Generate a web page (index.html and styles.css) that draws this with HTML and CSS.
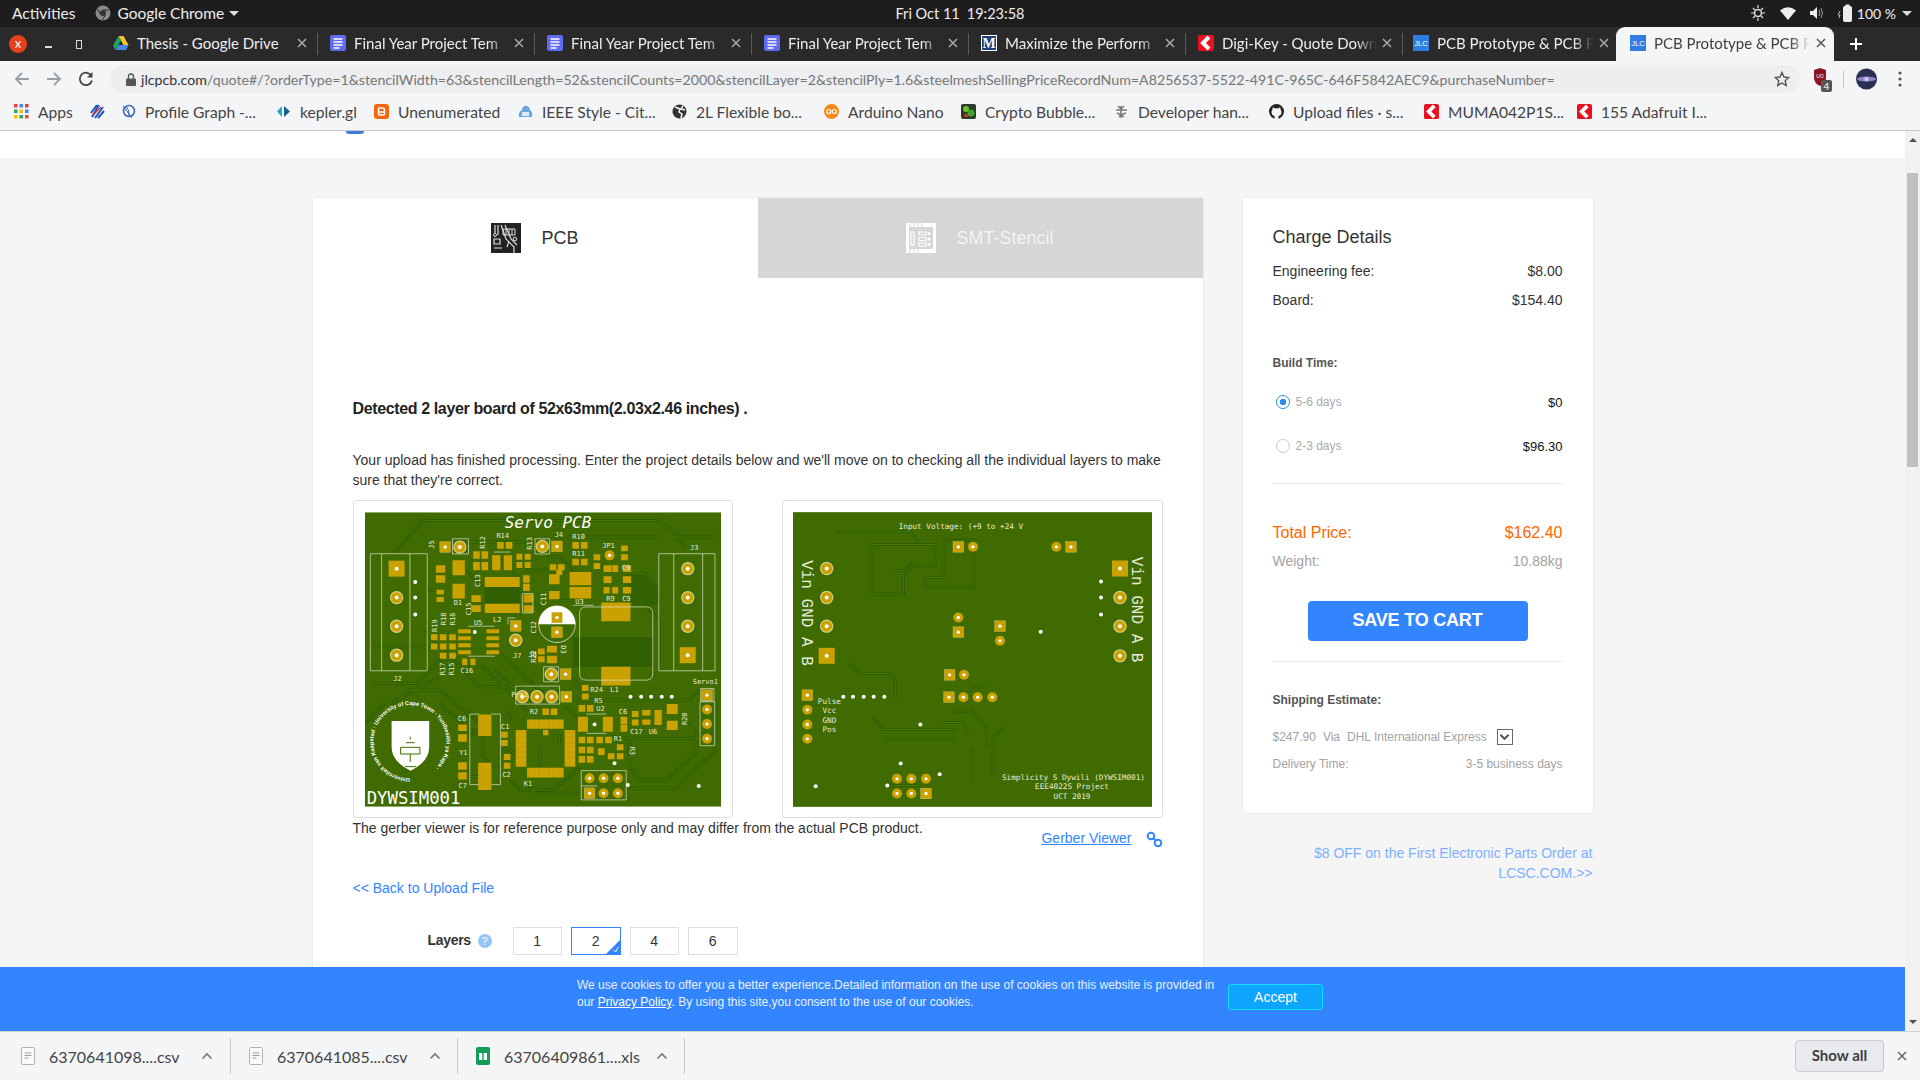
FILE: index.html

```html
<!DOCTYPE html>
<html lang="en">
<head>
	<meta charset="UTF-8">
	<title>PCB Prototype &amp; PCB Fabrication</title>
	<link rel="stylesheet" href="styles.css">
</head>
<body>

<svg class="defs" aria-hidden="true">
	<defs>
		<g id="rp"><circle r="20" fill="#d8cf8c"/><circle r="16.5" fill="#c9a100"/><circle r="6" fill="#fff"/></g>
		<g id="rps"><circle r="15" fill="#c9a100"/><circle r="5" fill="#fff"/></g>
		<g id="sp"><rect x="-24" y="-24" width="48" height="48" fill="#c9a100"/><circle r="6" fill="#fff"/></g>
		<g id="sps"><rect x="-16" y="-16" width="32" height="32" fill="#c9a100" stroke="#d8cf8c"/><circle r="5" fill="#fff"/></g>
		<symbol id="i-x" viewBox="0 0 12 12"><path d="M2 2l8 8M10 2l-8 8" fill="none" stroke="currentColor" stroke-width="1.5"/></symbol>
		<symbol id="i-doc" viewBox="0 0 16 16"><rect x="0" width="16" height="16" rx="2" fill="#5c6bf0"/><path d="M3.5 4h9M3.5 7h9M3.5 10h9M3.5 13h6" stroke="#fff" stroke-width="1.6"/></symbol>
		<symbol id="i-dk" viewBox="0 0 16 16"><rect width="16" height="16" rx="2" fill="#e8111f"/><path d="M11 2L5 8l6 6" fill="none" stroke="#fff" stroke-width="4"/></symbol>
		<symbol id="i-jlc" viewBox="0 0 16 16"><rect width="16" height="16" fill="#2f7de1"/><text x="8" y="11" text-anchor="middle" font-family="Liberation Sans" font-size="7.5" fill="#fff">JLC</text></symbol>
		<symbol id="i-file" viewBox="0 0 14 18"><path d="M1.5.5h11a1 1 0 0 1 1 1v15a1 1 0 0 1-1 1h-11a1 1 0 0 1-1-1v-15a1 1 0 0 1 1-1z" fill="#f8f9fa" stroke="#b0b3b6"/><path d="M3.5 6h7M3.5 8.5h7M3.5 11h4" stroke="#9a9da0"/></symbol>
		<symbol id="i-up" viewBox="0 0 12 8"><path d="M1.5 6.5L6 2l4.500 4.500" fill="none" stroke="#777" stroke-width="1.600"/></symbol>
	</defs>
</svg>

<div class="topbar">
	<div class="topbar-left">
		<span>Activities</span>
		<svg class="chrome-icon" viewBox="0 0 16 16"><circle cx="8" cy="8" r="7.500" fill="#8b8b8b"/><circle cx="8" cy="8" r="3" fill="#333"/><path d="M8 5h6M5.500 9.500L2.500 4M10.500 9.500L7.500 15" stroke="#333" stroke-width="1"/></svg>
		<span>Google Chrome</span>
		<i class="caret"></i>
	</div>
	<div class="clock"><span>Fri Oct 11</span><span>19:23:58</span></div>
	<div class="topbar-right">
		<svg class="tray" width="16" height="18" viewBox="0 0 16 18"><circle cx="8" cy="9" r="3.500" fill="none" stroke="#ddd" stroke-width="1.500"/><path d="M8 1v3M8 14v3M1 9h3M12 9h3M3 4l2 2M11 12l2 2M13 4l-2 2M5 12l-2 2" stroke="#ddd" stroke-width="1.200"/></svg>
		<svg class="tray" width="16" height="14" viewBox="0 0 16 14"><path d="M0 4.500Q8-2 16 4.500L8 14z" fill="#eee"/></svg>
		<svg class="tray" width="14" height="14" viewBox="0 0 14 14"><path d="M0 5h3l4-4v12l-4-4H0z" fill="#eee"/><path d="M9 4q2 3 0 6M11 2q3 5 0 10" fill="none" stroke="#999"/></svg>
		<svg class="tray" width="16" height="18" viewBox="0 0 16 18"><path d="M2 7L0 11h2l-1 3" fill="none" stroke="#bbb"/><rect x="5.500" y="2.500" width="8" height="15" rx="1" fill="#eee" stroke="#eee"/><rect x="7.500" y="0.500" width="4" height="2" fill="#eee"/></svg>
		<span class="battery">100 %</span>
		<i class="caret"></i>
	</div>
</div>

<div class="tabstrip">
	<div class="win-btns">
		<span class="win-close">x</span>
		<span class="win-min"></span>
		<span class="win-max"></span>
	</div>
	<div class="tab">
		<svg class="fav" viewBox="0 0 16 16"><path d="M5.500 1h5l5 9h-5z" fill="#f7c325"/><path d="M5.500 1L0 10.500l2.500 4.500L8 5.500z" fill="#1ea362"/><path d="M2.500 15h10.500l2.500-5H5.500z" fill="#4a86e8"/></svg>
		<span class="tab-title tab-title-full">Thesis - Google Drive</span>
		<svg class="tab-x"><use href="#i-x"/></svg>
	</div>
	<div class="tab">
		<svg class="fav"><use href="#i-doc"/></svg>
		<span class="tab-title">Final Year Project Tem</span>
		<svg class="tab-x"><use href="#i-x"/></svg>
	</div>
	<div class="tab">
		<svg class="fav"><use href="#i-doc"/></svg>
		<span class="tab-title">Final Year Project Tem</span>
		<svg class="tab-x"><use href="#i-x"/></svg>
	</div>
	<div class="tab">
		<svg class="fav"><use href="#i-doc"/></svg>
		<span class="tab-title">Final Year Project Tem</span>
		<svg class="tab-x"><use href="#i-x"/></svg>
	</div>
	<div class="tab">
		<svg class="fav" viewBox="0 0 16 16"><rect width="16" height="16" fill="#fff"/><rect x="1" y="1" width="14" height="14" fill="#1d3f7a"/><text x="8" y="13" text-anchor="middle" font-family="Liberation Serif" font-size="14" font-weight="700" fill="#fff">M</text></svg>
		<span class="tab-title">Maximize the Perform</span>
		<svg class="tab-x"><use href="#i-x"/></svg>
	</div>
	<div class="tab">
		<svg class="fav"><use href="#i-dk"/></svg>
		<span class="tab-title">Digi-Key - Quote Down</span>
		<svg class="tab-x"><use href="#i-x"/></svg>
	</div>
	<div class="tab tab-last">
		<svg class="fav"><use href="#i-jlc"/></svg>
		<span class="tab-title">PCB Prototype &amp; PCB F</span>
		<svg class="tab-x"><use href="#i-x"/></svg>
	</div>
	<div class="tab tab-active">
		<svg class="fav"><use href="#i-jlc"/></svg>
		<span class="tab-title">PCB Prototype &amp; PCB F</span>
		<svg class="tab-x"><use href="#i-x"/></svg>
	</div>
	<svg class="new-tab" viewBox="0 0 14 14"><path d="M7 1v12M1 7h12" stroke="#fff" stroke-width="2"/></svg>
</div>

<div class="toolbar">
	<svg class="nav" viewBox="0 0 16 16"><path d="M15 8H2M8 2L2 8l6 6" fill="none" stroke="#9aa0a6" stroke-width="1.800"/></svg>
	<svg class="nav" viewBox="0 0 16 16"><path d="M1 8h13M8 2l6 6-6 6" fill="none" stroke="#9aa0a6" stroke-width="1.800"/></svg>
	<svg class="nav" viewBox="0 0 16 16"><path d="M13.500 5A6.200 6.200 0 1 0 14 9.500" fill="none" stroke="#444" stroke-width="1.800"/><path d="M14.500 1v5.500H9z" fill="#444"/></svg>
	<div class="omnibox">
		<svg class="lock" viewBox="0 0 10 13"><path d="M2.500 6V3.500a2.500 2.500 0 0 1 5 0V6" fill="none" stroke="#555" stroke-width="1.300"/><rect y="5.500" width="10" height="7.500" rx="1" fill="#555"/></svg>
		<span class="url"><b>jlcpcb.com</b>/quote#/?orderType=1&amp;stencilWidth=63&amp;stencilLength=52&amp;stencilCounts=2000&amp;stencilLayer=2&amp;stencilPly=1.6&amp;steelmeshSellingPriceRecordNum=A8256537-5522-491C-965C-646F5842AEC9&amp;purchaseNumber=</span>
		<svg class="star" viewBox="0 0 16 16"><path d="M8 1.500l2 4.500 4.800.500-3.600 3.200 1 4.800L8 12l-4.200 2.500 1-4.800L1.200 6.500 6 6z" fill="none" stroke="#555" stroke-width="1.400"/></svg>
	</div>
	<div class="ext">
		<svg width="16" height="22" viewBox="0 0 16 22"><path d="M1 2l6-2 6 2v8q0 5-6 8-6-3-6-8z" fill="#8d1420"/><text x="7" y="10" text-anchor="middle" font-family="Liberation Sans" font-size="5" fill="#fff">UO</text></svg>
		<span class="ext-badge">4</span>
	</div>
	<span class="tool-sep"></span>
	<svg class="avatar" viewBox="0 0 20 20"><circle cx="10" cy="10" r="10" fill="#2b2f52"/><ellipse cx="10" cy="10" rx="9" ry="2.500" fill="#8f86c9"/><circle cx="10" cy="10" r="2" fill="#d8d0e8"/></svg>
	<svg class="menu" viewBox="0 0 4 16"><circle cx="2" cy="2" r="1.600" fill="#555"/><circle cx="2" cy="8" r="1.600" fill="#555"/><circle cx="2" cy="14" r="1.600" fill="#555"/></svg>
</div>

<div class="bookmarks">
	<div class="bm">
		<svg class="bm-ico" viewBox="0 0 15 15"><g><rect width="3.500" height="3.500" fill="#ea4335"/><rect x="5.500" width="3.500" height="3.500" fill="#4285f4"/><rect x="11" width="3.500" height="3.500" fill="#ea4335"/><rect y="5.500" width="3.500" height="3.500" fill="#34a853"/><rect x="5.500" y="5.500" width="3.500" height="3.500" fill="#fbbc05"/><rect x="11" y="5.500" width="3.500" height="3.500" fill="#4285f4"/><rect y="11" width="3.500" height="3.500" fill="#fbbc05"/><rect x="5.500" y="11" width="3.500" height="3.500" fill="#34a853"/><rect x="11" y="11" width="3.500" height="3.500" fill="#ea4335"/></g></svg>
		<span>Apps</span>
	</div>
	<div class="bm">
		<svg class="bm-ico" viewBox="0 0 15 15"><path d="M2 13L9 1M5 14l8-11M1 9l6-8M8 14l6-7" stroke="#2456b8" stroke-width="2"/><path d="M3 11l8-8" stroke="#d8352a" stroke-width="1.500"/></svg>
	</div>
	<div class="bm">
		<svg class="bm-ico" viewBox="0 0 15 15"><circle cx="8" cy="7" r="5.500" fill="none" stroke="#3b64b4" stroke-width="1.500"/><path d="M2 2l9 12M5 2q4 5 3 10" fill="none" stroke="#3b64b4"/></svg>
		<span>Profile Graph -...</span>
	</div>
	<div class="bm">
		<svg class="bm-ico" viewBox="0 0 15 15"><path d="M6 2L1 7.500 6 13z" fill="#1fa8c9"/><path d="M8 2l6 5.500L8 13z" fill="#16608a"/></svg>
		<span>kepler.gl</span>
	</div>
	<div class="bm">
		<svg class="bm-ico" viewBox="0 0 15 15"><rect width="15" height="15" rx="3" fill="#f4650e"/><path d="M4.500 4h4a2 2 0 0 1 2 2v1M4.500 4v6a1 1 0 0 0 1 1h4a1 1 0 0 0 1-1V8H5" fill="none" stroke="#fff" stroke-width="1.500"/></svg>
		<span>Unenumerated</span>
	</div>
	<div class="bm">
		<svg class="bm-ico" viewBox="0 0 15 15"><path d="M1 13q-1-5 3-7 1-5 5-4 3 1 3 4 3 2 2 7z" fill="#6ba6dc"/><rect x="4" y="8" width="7" height="4" fill="#dcebf7"/></svg>
		<span>IEEE Style - Cit...</span>
	</div>
	<div class="bm">
		<svg class="bm-ico" viewBox="0 0 15 15"><circle cx="7.500" cy="7.500" r="7" fill="#333"/><path d="M3 3l5 2-1 3 3 2-1 4M11 2l-2 3 4 1" fill="none" stroke="#f4f5f7" stroke-width="1.500"/></svg>
		<span>2L Flexible bo...</span>
	</div>
	<div class="bm">
		<svg class="bm-ico" viewBox="0 0 15 15"><circle cx="7.500" cy="7.500" r="7.500" fill="#f08a1a"/><circle cx="4.800" cy="7.500" r="2" fill="none" stroke="#fff" stroke-width="1.200"/><circle cx="10.200" cy="7.500" r="2" fill="none" stroke="#fff" stroke-width="1.200"/></svg>
		<span>Arduino Nano</span>
	</div>
	<div class="bm">
		<svg class="bm-ico" viewBox="0 0 15 15"><rect width="15" height="15" rx="2" fill="#2c3a2a"/><circle cx="5" cy="5" r="3" fill="#6ac22e"/><circle cx="10" cy="9" r="3.500" fill="#3ea52a"/><circle cx="5" cy="11.500" r="2" fill="#c2392b"/></svg>
		<span>Crypto Bubble...</span>
	</div>
	<div class="bm">
		<svg class="bm-ico" viewBox="0 0 15 15"><path d="M4 2l3 3 3-3M2 6h11M3 9l4 2 5-2M5 13l2-2 3 2M7 2v12" fill="none" stroke="#777" stroke-width="1.500"/></svg>
		<span>Developer han...</span>
	</div>
	<div class="bm">
		<svg class="bm-ico" viewBox="0 0 15 15"><circle cx="7.500" cy="7.500" r="7.500" fill="#222"/><path d="M5.500 15v-3q-3-.5-3-4 0-1.500 1-2.500-.2-1.200.2-2 1.200 0 2.300 1 1.500-.4 3 0 1.100-1 2.300-1 .4.800.2 2 1 1 1 2.500 0 3.500-3 4v3z" fill="#f4f5f7"/></svg>
		<span>Upload files · s...</span>
	</div>
	<div class="bm">
		<svg class="bm-ico"><use href="#i-dk"/></svg>
		<span>MUMA042P1S...</span>
	</div>
	<div class="bm">
		<svg class="bm-ico"><use href="#i-dk"/></svg>
		<span>155 Adafruit I...</span>
	</div>
</div>

<div class="viewport">
	<div class="page">
		<div class="site-head"><i class="site-logo"></i></div>

		<div class="wrap">
			<div class="main-card">
				<div class="tabs">
					<div class="tab-pick">
						<svg class="pick-ico" viewBox="0 0 30 30">
							<rect width="30" height="30" fill="#222"/>
							<path d="M4 2v8M10 2l5 14 8 8v6M14 2l6 14 6 6M3 16h6v5H3zM3 25h8M7 2v10M18 18l-2 6" fill="none" stroke="#ddd" stroke-width="1.200"/>
							<path d="M12 6h12v6H12zM15 6v6M18 6v6M21 6v6" fill="none" stroke="#ddd"/>
							<circle cx="24" cy="16" r="1.800" fill="none" stroke="#ddd"/>
							<circle cx="4" cy="12" r="1.500" fill="none" stroke="#ddd"/>
						</svg>
						<span>PCB</span>
					</div>
					<div class="tab-pick tab-pick-off">
						<svg class="pick-ico" viewBox="0 0 30 30">
							<path d="M0 0h30v30H0z" fill="#fff"/>
							<path d="M3 4h24v22H3z" fill="#d6d6d6"/>
							<path d="M4 0v4M8 0v4M12 0v4M16 0v4M4 26v4M8 26v4M12 26v4" stroke="#d6d6d6"/>
							<path d="M5 9h3v13H5zM13 9h7v3h-7zM13 14.500h7v3h-7zM13 20h7v3h-7z" fill="none" stroke="#fff" stroke-width="1.200"/>
							<circle cx="23" cy="10.500" r="1.500" fill="#fff"/><circle cx="23" cy="16" r="1.500" fill="#fff"/><circle cx="23" cy="21.500" r="1.500" fill="#fff"/>
						</svg>
						<span>SMT-Stencil</span>
					</div>
				</div>

				<div class="card-body">
					<h3 class="detected">Detected 2 layer board of 52x63mm(2.03x2.46 inches) .</h3>
					<p class="notice">Your upload has finished processing. Enter the project details below and we'll move on to checking all the individual layers to make sure that they're correct.</p>

					<div class="boards">
						<div class="board-frame">
							<svg class="pcb" viewBox="75 66 1070 884">
								<rect x="75" y="66" width="1070" height="884" fill="#3f6b00"/>
								<path d="M700 440h240v90H700z" fill="#2f5f00"/>
								<path d="M860 255h60l40 50v40h-80z" fill="#336200"/>
								<g class="tr-dark"><path id="tr-a" d="M160 190L250 90H950l70 40M1130 640V780L1010 895H860M75 700l60-60M480 490L610 610M270 440L420 590H540L570 620M300 530H430L560 660M430 700V800L460 830M380 155H600M880 250H920L960 300M560 240H640M600 770V830M660 730V760M380 720H415M380 860H415M820 740L880 745H1100M700 630H1050L1080 600M640 140H960M250 420H270M100 470H290M262 300H290M320 260H340M380 240L430 290M520 240L540 300L620 370M700 240L660 200H620M780 240L800 220M880 310L960 390V530M720 350L700 330H640M465 540L540 610M300 600L420 700M300 640L410 740M150 640L300 560M500 660L520 700M680 650L720 690M720 830L700 850L640 900H540L510 870M870 740V830L900 870H980L1070 790V720M940 700H1060M480 770L530 790M700 560L720 600M1000 130L1040 170M1000 140H1130M200 600H300M100 580H230L310 500M560 880L590 910H720"/></g>
								<use href="#tr-a" class="tr-lite"/>

								<path class="cu" d="M472 155h20v20h-20zM498 155h20v20h-20zM400 183h20v22h-20zM425 183h20v22h-20zM400 215h20v25h-20zM425 215h20v25h-20zM457 195h25v45h-25zM492 195h25v45h-25zM530 190h18v18h-18zM555 190h18v18h-18zM530 215h18v18h-18zM555 215h18v18h-18zM435 260h105v30h-105zM435 340h105v28h-105zM338 210h37v45h-37zM338 280h37v45h-37zM288 225h28v22h-28zM288 255h28v22h-28zM290 298h22v15h-22zM290 320h22v15h-22zM395 315h28v20h-28zM395 345h28v20h-28zM550 255h20v22h-20zM550 280h20v22h-20zM552 312h28v25h-28zM552 345h28v22h-28zM630 222h20v18h-20zM655 222h20v18h-20zM628 252h32v30h-32zM628 302h32v25h-32zM698 155h20v20h-20zM724 155h20v20h-20zM698 205h20v20h-20zM724 205h20v20h-20zM762 192h20v18h-20zM762 218h20v18h-20zM845 165h20v18h-20zM845 192h20v18h-20zM792 225h24v20h-24zM818 225h18v20h-18zM850 225h25v20h-25zM792 258h24v20h-24zM850 258h25v20h-25zM792 290h18v20h-18zM818 290h18v20h-18zM850 290h25v20h-25zM690 245h65v40h-65zM690 290h65v35h-65zM355 417h38v12h-38zM355 438h38v12h-38zM355 459h38v12h-38zM355 480h38v12h-38zM440 417h38v12h-38zM440 438h38v12h-38zM440 459h38v12h-38zM440 480h38v12h-38zM273 432h20v18h-20zM300 432h20v18h-20zM328 432h20v18h-20zM273 460h20v18h-20zM300 460h20v18h-20zM328 460h20v18h-20zM300 488h20v18h-20zM328 488h20v18h-20zM367 505h15v20h-15zM392 505h15v20h-15zM595 475h20v18h-20zM595 498h20v18h-20zM622 467h30v20h-30zM622 497h30v22h-30zM785 337h88v56h-88zM785 530h88v56h-88zM727 585h20v18h-20zM727 610h20v18h-20zM608 655h20v20h-20zM633 655h20v20h-20zM717 645h20v20h-20zM742 645h20v20h-20zM715 680h30v45h-30zM790 680h30v45h-30zM843 680h20v22h-20zM843 703h20v22h-20zM877 663h20v18h-20zM877 688h20v18h-20zM908 660h25v16h-25zM908 688h25v16h-25zM945 660h22v45h-22zM982 642h33v30h-33zM982 692h33v28h-33zM415 673h40v65h-40zM415 818h40v82h-40zM355 703h26v20h-26zM355 733h26v22h-26zM355 817h26v22h-26zM355 847h26v22h-26zM484 725h20v18h-20zM484 750h20v18h-20zM492 792h20v18h-20zM492 818h20v18h-20zM562 688h110v28h-110zM562 833h110v30h-110zM528 720h32v110h-32zM675 720h32v110h-32zM717 740h20v20h-20zM742 740h20v20h-20zM770 740h20v20h-20zM797 740h20v20h-20zM717 770h20v20h-20zM742 770h20v20h-20zM717 798h20v20h-20zM742 798h20v20h-20zM775 775h20v20h-20zM805 790h20v18h-20zM832 763h20v18h-20zM832 790h20v18h-20zM650 238h18v16h-18zM610 720h16v16h-16z"/>
								<path d="M575 688v28M590 688v28M605 688v28M620 688v28M635 688v28M650 688v28M575 833v30M590 833v30M605 833v30M620 833v30M635 833v30M650 833v30M528 735h32M528 750h32M528 765h32M528 780h32M528 795h32M528 810h32M675 735h32M675 750h32M675 765h32M675 780h32M675 795h32M675 810h32" fill="none" stroke="#d7c24e" stroke-width="1"/>
								<path d="M435 290h105v50H435z" fill="#2f5f00"/>

								<use href="#sp" x="170" y="235"/><use href="#rp" x="170" y="322"/><use href="#rp" x="170" y="408"/><use href="#rp" x="170" y="495"/>
								<use href="#rp" x="1045" y="235"/><use href="#rp" x="1045" y="322"/><use href="#rp" x="1045" y="408"/><use href="#sp" x="1045" y="495"/>
								<use href="#sps" x="316" y="170"/><use href="#rp" x="360" y="170"/><use href="#rp" x="608" y="168"/><use href="#sps" x="652" y="168"/>
								<use href="#sps" x="528" y="407"/><use href="#rp" x="528" y="450"/>
								<use href="#rp" x="635" y="552"/><use href="#sps" x="678" y="552"/>
								<use href="#rp" x="548" y="620"/><use href="#rp" x="592" y="620"/><use href="#rp" x="636" y="620"/><use href="#sps" x="680" y="620"/>
								<use href="#rps" x="810" y="195"/>
								<use href="#sps" x="750" y="910"/><use href="#rps" x="750" y="865"/><use href="#rps" x="792" y="865"/><use href="#rps" x="835" y="865"/><use href="#rps" x="792" y="910"/><use href="#rps" x="835" y="910"/>
								<use href="#sps" x="1103" y="615"/><use href="#rps" x="1103" y="658"/><use href="#rps" x="1103" y="702"/><use href="#rps" x="1103" y="746"/>

								<path d="M597 402a55 55 0 0 1 110 0z" fill="#fff"/>
								<circle cx="652" cy="402" r="55" fill="none" stroke="#fff" stroke-width="2"/>
								<use href="#sps" x="652" y="382"/><use href="#sps" x="652" y="426"/>

								<g fill="#fff">
									<circle cx="226" cy="275" r="6"/><circle cx="226" cy="322" r="6"/><circle cx="226" cy="373" r="6"/><circle cx="873" cy="620" r="6"/><circle cx="905" cy="620" r="6"/><circle cx="935" cy="620" r="6"/><circle cx="967" cy="620" r="6"/><circle cx="997" cy="620" r="6"/><circle cx="765" cy="703" r="6"/><circle cx="1078" cy="888" r="6"/><circle cx="405" cy="425" r="6"/><circle cx="865" cy="885" r="6"/><circle cx="825" cy="820" r="6"/>
								</g>

								<g class="silk">
									<path d="M91 190h171v352H91zM125 190v352M210 190v352M958 190h169v352H958zM1003 190v352M1090 190v352M1082 635h44v132h-44zM1084 595h40v38h-40z"/>
									<path d="M740 350h180q20 0 20 20v180q0 20-20 20H740q-20 0-20-20V370q0-20 20-20z"/>
									<path d="M390 672h28M390 672v212M482 672v212M390 884h28M455 884h27M455 672h27M385 408h80M385 498h80M548 310h32v58h-32zM528 588h132v54H528zM612 530h45v45h-45zM338 145h48v46h-48zM586 145h44v46h-44zM505 383h22M505 383v20M725 842h135v88H725zM725 888h48M700 345h62M740 672h60M740 730h60M462 185h50"/>
								</g>

								<g class="silk-text">
									<text class="s-big" x="495" y="112">Servo PCB</text>
									<text class="s-id" x="80" y="943">DYWSIM001</text>
									<text x="470" y="144">R14</text><text x="698" y="146">R10</text><text x="698" y="198">R11</text><text x="788" y="173">JP1</text><text x="1052" y="178">J3</text><text x="160" y="573">J2</text><text x="645" y="140">J4</text><text x="800" y="332">R9</text><text x="848" y="332">C9</text><text x="847" y="240">C9</text><text x="403" y="403">U5</text><text x="460" y="395">L2</text><text x="342" y="345">D1</text><text x="520" y="505">J7</text><text x="362" y="550">C16</text><text x="565" y="620" text-anchor="end">Prg1</text><text x="752" y="606">R24</text><text x="812" y="606">L1</text><text x="764" y="640">R5</text><text x="570" y="672">R2</text><text x="770" y="664">U2</text><text x="838" y="672">C6</text><text x="872" y="733">C17</text><text x="928" y="733">U6</text><text x="823" y="752">R1</text><text x="354" y="693">C6</text><text x="358" y="795">Y1</text><text x="356" y="893">C7</text><text x="484" y="716">C1</text><text x="488" y="860">C2</text><text x="552" y="888">K1</text><text x="1060" y="583">Servo1</text><text x="707" y="342">U3</text><text x="566" y="500">J6</text>
									<text transform="rotate(-90 282 175)" x="282" y="175">J5</text><text transform="rotate(-90 437 175)" x="437" y="175">R12</text><text transform="rotate(-90 578 178)" x="578" y="178">R13</text><text transform="rotate(-90 420 290)" x="420" y="290">C13</text><text transform="rotate(-90 393 375)" x="393" y="375">C15</text><text transform="rotate(-90 620 345)" x="620" y="345">C11</text><text transform="rotate(-90 590 430)" x="590" y="430">C12</text><text transform="rotate(-90 590 518)" x="590" y="518">R22</text><text transform="rotate(90 665 465)" x="665" y="465">D3</text><text transform="rotate(-90 316 555)" x="316" y="555">R17</text><text transform="rotate(-90 343 555)" x="343" y="555">R15</text><text transform="rotate(-90 292 425)" x="292" y="425">R19</text><text transform="rotate(-90 318 405)" x="318" y="405">R18</text><text transform="rotate(-90 345 405)" x="345" y="405">R16</text><text transform="rotate(90 870 770)" x="870" y="770">R3</text><text transform="rotate(-90 1042 705)" x="1042" y="705">R20</text>
								</g>

								<path id="uct-ring" d="M210 865a110 110 0 1 1 .1 0" fill="none"/>
								<text class="uct-text"><textPath href="#uct-ring">Universiteit van Kaapstad · University of Cape Town · Yunibesithi ya Kapa ·</textPath></text>
								<path d="M155 693h113v78q0 44-56 71-57-27-57-71z" fill="#fff"/>
								<path d="M182 772h58v20h-58zM211 740v8M198 758h26M211 792v24M195 830h34" fill="none" stroke="#3f6b00" stroke-width="3"/>
							</svg>
						</div>
						<div class="board-frame board-frame-r">
							<svg class="pcb" viewBox="68 66 1077 884">
								<rect x="68" y="66" width="1077" height="884" fill="#3f6b00"/>
								<g class="tr-dark tr-thin"><path id="tr-b" d="M195 125H420L443 155M302 163H497V228H430L400 245V312H302ZM365 241H400L428 213M518 150H612V290H465V262H518ZM235 518L268 550H355L375 570V622M605 590H650M308 682L340 718H550L555 730M338 746H555M512 697H580L592 730M548 665H605L648 710V770M700 712L668 742V860M606 775V880M351 886H450"/></g>
								<use href="#tr-b" class="tr-lite"/>

								<use href="#rp" x="169" y="235"/><use href="#rp" x="169" y="322"/><use href="#rp" x="169" y="408"/><use href="#sp" x="169" y="497"/>
								<use href="#sp" x="1049" y="235"/><use href="#rp" x="1049" y="322"/><use href="#rp" x="1049" y="408"/><use href="#rp" x="1049" y="497"/>
								<use href="#sps" x="564" y="170"/><use href="#rps" x="608" y="170"/><use href="#rps" x="858" y="170"/><use href="#sps" x="902" y="170"/>
								<use href="#rps" x="564" y="382"/><use href="#sps" x="564" y="426"/><use href="#sps" x="689" y="408"/><use href="#rps" x="689" y="452"/>
								<use href="#sps" x="538" y="554"/><use href="#rps" x="581" y="554"/>
								<use href="#sps" x="536" y="621"/><use href="#rps" x="579" y="621"/><use href="#rps" x="622" y="621"/><use href="#rps" x="666" y="621"/>
								<use href="#sps" x="111" y="615"/><use href="#rps" x="111" y="659"/><use href="#rps" x="111" y="703"/><use href="#rps" x="111" y="746"/>
								<use href="#rps" x="380" y="866"/><use href="#rps" x="423" y="866"/><use href="#rps" x="467" y="866"/><use href="#rps" x="380" y="910"/><use href="#rps" x="423" y="910"/><use href="#sps" x="467" y="910"/>

								<g fill="#fff">
									<circle cx="992" cy="274" r="6"/><circle cx="992" cy="322" r="6"/><circle cx="992" cy="373" r="6"/><circle cx="811" cy="425" r="6"/><circle cx="219" cy="620" r="6"/><circle cx="248" cy="620" r="6"/><circle cx="280" cy="620" r="6"/><circle cx="310" cy="620" r="6"/><circle cx="342" cy="620" r="6"/><circle cx="450" cy="703" r="6"/><circle cx="391" cy="820" r="6"/><circle cx="508" cy="852" r="6"/><circle cx="136" cy="888" r="6"/><circle cx="351" cy="886" r="6"/>
								</g>

								<g class="silk-text back">
									<text x="385" y="118">Input Voltage: (+9 to +24 V</text>
									<text class="s-side" transform="rotate(90 96 210)" x="96" y="210">Vin GND A B</text>
									<text class="s-side" transform="rotate(90 1084 200)" x="1084" y="200">Vin GND A B</text>
									<text x="177" y="642" text-anchor="middle">Pulse</text><text x="177" y="670" text-anchor="middle">Vcc</text><text x="177" y="698" text-anchor="middle">GND</text><text x="177" y="726" text-anchor="middle">Pos</text>
									<text x="695" y="870">Simplicity S Dywili (DYWSIM001)</text>
									<text x="905" y="898" text-anchor="middle">EEE4022S Project</text>
									<text x="905" y="926" text-anchor="middle">UCT 2019</text>
								</g>
							</svg>
						</div>
					</div>

					<div class="viewer-row">
						<p class="viewer-note">The gerber viewer is for reference purpose only and may differ from the actual PCB product.</p>
						<div class="viewer-link">
							<a class="link-u">Gerber Viewer</a>
							<svg class="chain" viewBox="0 0 17 17"><circle cx="5" cy="5" r="3.300" fill="none" stroke="#3385ff" stroke-width="2"/><circle cx="12" cy="12" r="3.300" fill="none" stroke="#3385ff" stroke-width="2"/><path d="M7.500 7.500l2 2" stroke="#3385ff" stroke-width="2"/></svg>
						</div>
					</div>

					<a class="back-link">&lt;&lt; Back to Upload File</a>

					<div class="layers">
						<span class="layers-label">Layers</span>
						<span class="help">?</span>
						<div class="layer-opts">
							<span class="opt">1</span>
							<span class="opt opt-on">2<svg class="opt-tick" viewBox="0 0 16 16"><path d="M16 0v16H0z" fill="#3385ff"/><path d="M8.500 11l2 2 3-5" fill="none" stroke="#fff"/></svg></span>
							<span class="opt">4</span>
							<span class="opt">6</span>
						</div>
					</div>
				</div>
			</div>

			<div class="side">
				<div class="charge-card">
					<h4 class="charge-title">Charge Details</h4>
					<div class="row"><span>Engineering fee:</span><span>$8.00</span></div>
					<div class="row"><span>Board:</span><span>$154.40</span></div>

					<div class="sub-title build-title">Build Time:</div>
					<div class="row-build">
						<label><i class="radio radio-on"></i>5-6 days</label><span>$0</span>
					</div>
					<div class="row-build">
						<label><i class="radio"></i>2-3 days</label><span>$96.30</span>
					</div>
					<div class="rule rule-top"></div>

					<div class="row row-total"><span>Total Price:</span><span>$162.40</span></div>
					<div class="row row-weight"><span>Weight:</span><span>10.88kg</span></div>
					<button class="cart-btn">SAVE TO CART</button>
					<div class="rule rule-mid"></div>

					<div class="sub-title ship-title">Shipping Estimate:</div>
					<div class="ship-row">
						<span>$247.90</span><span>Via</span><span>DHL International Express</span>
						<i class="ship-drop"><svg viewBox="0 0 12 8"><path d="M1.500 1.500L6 6l4.500-4.500" fill="none" stroke="#555" stroke-width="2.200"/></svg></i>
					</div>
					<div class="ship-time"><span>Delivery Time:</span><span>3-5 business days</span></div>
				</div>
				<a class="lcsc">$8 OFF on the First Electronic Parts Order at LCSC.COM.&gt;&gt;</a>
			</div>
		</div>

		<div class="cookie">
			<p class="cookie-text">We use cookies to offer you a better experience.Detailed information on the use of cookies on this website is provided in<br>our <a>Privacy Policy</a>. By using this site,you consent to the use of our cookies.</p>
			<button class="accept">Accept</button>
		</div>
	</div>
	<div class="scrollbar">
		<i class="sb-up"></i>
		<i class="sb-thumb"></i>
		<i class="sb-down"></i>
	</div>
</div>

<div class="downloads">
	<div class="dl">
		<svg class="dl-ico"><use href="#i-file"/></svg>
		<span class="dl-name">6370641098....csv</span>
		<svg class="dl-up"><use href="#i-up"/></svg>
	</div>
	<div class="dl">
		<svg class="dl-ico"><use href="#i-file"/></svg>
		<span class="dl-name">6370641085....csv</span>
		<svg class="dl-up"><use href="#i-up"/></svg>
	</div>
	<div class="dl">
		<svg class="dl-ico" viewBox="0 0 14 18"><rect width="14" height="18" rx="2" fill="#0f9d58"/><rect x="3" y="6" width="8" height="7" fill="#fff"/><path d="M7 6v7" stroke="#0f9d58" stroke-width="1.500"/></svg>
		<span class="dl-name">63706409861....xls</span>
		<svg class="dl-up"><use href="#i-up"/></svg>
	</div>
	<button class="show-all">Show all</button>
	<svg class="dl-close"><use href="#i-x"/></svg>
</div>

</body>
</html>
```

FILE: styles.css

```css
*{margin: 0;padding: 0;box-sizing: border-box;}
html,body{height: 100%;}
body{
	width: 1920px;
	height: 1080px;
	overflow: hidden;
	display: flex;
	flex-direction: column;
	font-family: "Liberation Sans", Arial, sans-serif;
	font-size: 14px;
	color: #333;
	background: #f4f5f7;
}
.defs{position: absolute;width: 0;height: 0;}

/*ubuntu top bar*/
.topbar{
	height: 27px;
	flex: none;
	display: grid;
	grid-template-columns: 1fr auto 1fr;
	align-items: center;
	padding: 0 12px 1px;
	background: #1d1d1d;
	color: #eee;
	font-family: Lato, "Noto Sans", sans-serif;
	font-size: 15.500px;
}
.topbar-left{display: flex;align-items: center;}
.chrome-icon{width: 16px;height: 16px;margin: 0 6px 0 20px;}
.caret{
	display: inline-block;
	width: 0;
	height: 0;
	margin-left: 5px;
	border-left: 5px solid transparent;
	border-right: 5px solid transparent;
	border-top: 5px solid #ddd;
}
.clock{display: flex;gap: 7px;font-size: 14.500px;}
.topbar-right{display: flex;align-items: center;justify-content: flex-end;}
.tray{margin-right: 14px;}
.tray:nth-child(4){margin-right: 3px;}
.battery{font-size: 14px;}
.topbar-right .caret{margin-left: 6px;margin-right: -4px;}

/*tab strip*/
.tabstrip{
	height: 34px;
	flex: none;
	display: flex;
	align-items: stretch;
	background: #2b2a2b;
	color: #eee;
	font-family: Lato, "Noto Sans", sans-serif;
	font-size: 15px;
}
.win-btns{width: 101px;display: flex;align-items: center;padding-left: 9px;}
.win-close{
	width: 18px;
	height: 18px;
	border-radius: 50%;
	background: #e6401b;
	color: #fff;
	font-size: 13px;
	line-height: 17px;
	text-align: center;
}
.win-min{width: 7px;height: 2px;background: #ddd;margin: 5px 0 0 18px;}
.win-max{width: 6px;height: 9px;border: 1px solid #ddd;margin-left: 24px;}
.tab{
	width: 217px;
	display: flex;
	align-items: center;
	padding: 0 10px 2px 12px;
	position: relative;
}
.tab::after{
	content: "";
	position: absolute;
	right: 0;
	top: 6px;
	bottom: 6px;
	width: 1px;
	background: #5a595a;
}
.tab-last::after{display: none;}
.fav{width: 16px;height: 16px;flex: none;margin-right: 8px;}
.tab-title{
	flex: 1;
	white-space: nowrap;
	-webkit-mask-image: linear-gradient(to right, #000 86%, transparent 99%);
	mask-image: linear-gradient(to right, #000 86%, transparent 99%);
}
.tab-title-full{-webkit-mask-image: none;mask-image: none;}
.tab-x{width: 12px;height: 12px;margin-left: 3px;color: #aaa;flex: none;}
.tab-last{width: 213px;padding-left: 10px;padding-right: 8px;}
.tab-active{
	width: 218px;
	padding-left: 14px;
	background: #f4f5f7;
	color: #3c4043;
	border-radius: 9px 9px 0 0;
}
.tab-active::after{display: none;}
.tab-active .tab-x{color: #555;}
.new-tab{width: 14px;height: 14px;align-self: center;margin-left: 15px;margin-bottom: 1px;}

/*address bar*/
.toolbar{
	height: 37px;
	flex: none;
	display: flex;
	align-items: center;
	padding: 0 0 1px 14px;
	background: #f4f5f7;
	font-family: Lato, "Noto Sans", sans-serif;
}
.nav{width: 16px;height: 16px;margin-right: 16px;}
.nav:nth-child(3){margin-right: 16px;}
.omnibox{
	width: 1690px;
	height: 28px;
	display: flex;
	align-items: center;
	margin-left: 0;
	padding: 0 10px 0 16px;
	background: #eceef0;
	border-radius: 14px;
}
.lock{width: 10px;height: 13px;margin-right: 5px;flex: none;}
.url{flex: 1;font-size: 14.200px;color: #777;white-space: nowrap;}
.url b{font-weight: 400;color: #333;}
.star{width: 16px;height: 16px;flex: none;}
.ext{width: 18px;height: 26px;margin-left: 13px;position: relative;}
.ext svg{display: block;margin-top: 2px;}
.ext-badge{
	position: absolute;
	left: 8px;
	top: 14px;
	width: 11px;
	height: 12px;
	background: #555;
	border-radius: 2px;
	color: #fff;
	font-size: 10px;
	line-height: 12px;
	text-align: center;
}
.tool-sep{width: 1px;height: 18px;background: #ccc;margin: 0 12px;}
.avatar{width: 21px;height: 24px;}
.menu{width: 4px;height: 16px;margin-left: 21px;}

/*bookmarks*/
.bookmarks{
	height: 33px;
	flex: none;
	display: grid;
	grid-template-columns: 76px 31px 155px 98px 144px 154px 152px 137px 153px 155px 155px 153px 1fr;
	align-items: center;
	padding: 0 0 5px 14px;
	background: #f4f5f7;
	border-bottom: 1px solid #c9c8d0;
	font-family: Lato, "Noto Sans", sans-serif;
	font-size: 15.600px;
	color: #444;
}
.bm{display: flex;align-items: center;white-space: nowrap;}
.bm-ico{width: 15px;height: 15px;margin-right: 9px;flex: none;}

/*page*/
.viewport{flex: 1;min-height: 0;display: flex;}
.page{flex: 1;position: relative;overflow: hidden;background: #f5f5f5;}
.site-head{height: 27px;background: #fff;position: relative;}
.site-logo{
	position: absolute;
	left: 346px;
	top: 0;
	width: 18px;
	height: 3px;
	background: #3a7fd5;
	border-radius: 0 0 9px 9px;
}
.wrap{
	display: flex;
	justify-content: center;
	gap: 40px;
	margin-top: 40px;
}
.main-card{
	width: 890px;
	height: 900px;
	flex: none;
	background: #fff;
	box-shadow: 0 0 2px #ddd;
}
.tabs{display: flex;height: 80px;}
.tab-pick{
	flex: 1;
	display: flex;
	align-items: center;
	justify-content: center;
	gap: 20px;
	font-size: 18px;
}
.pick-ico{width: 30px;height: 30px;}
.tab-pick-off{background: #d6d6d6;color: #f3f3f3;}

.card-body{padding: 121px 40px 0;}
.detected{font-size: 16px;line-height: 20px;font-weight: 700;color: #222;letter-spacing: -.37px;}
.notice{line-height: 20px;margin-top: 31px;}
.boards{display: flex;justify-content: space-between;margin-top: 10px;}
.board-frame{
	width: 380px;
	height: 318px;
	padding: 11px;
	border: 1px solid #ddd;
	border-radius: 3px;
}
.board-frame-r{width: 381px;padding: 11px 10px;}
.pcb{display: block;width: 100%;height: 295px;}
.cu{fill: #c9a100;}
.tr-dark{fill: none;stroke: #2e5c00;stroke-width: 9;}
.tr-thin{stroke: #2b5a00;stroke-width: 8;}
.tr-lite{fill: none;stroke: #4a7a00;stroke-width: 3;}
.silk path{fill: none;stroke: #e6e9d8;stroke-width: 2;}
.silk-text text{
	font-family: "DejaVu Sans Mono", monospace;
	font-size: 21px;
	fill: #e8ecd8;
}
.silk-text .s-big{font-size: 48px;font-style: italic;fill: #fff;}
.silk-text .s-id{font-size: 52px;fill: #fff;}
.back text{font-size: 23px;}
.back .s-side{font-family: "Liberation Mono", monospace;font-size: 48px;}
.uct-text{font-family: "Liberation Sans", sans-serif;font-size: 17px;font-weight: 700;fill: #fff;}

.viewer-row{display: flex;justify-content: space-between;align-items: flex-start;}
.viewer-note{line-height: 20px;}
.viewer-link{display: flex;align-items: center;gap: 14px;margin-top: 10px;height: 20px;}
.link-u{color: #3385ff;text-decoration: underline;}
.chain{width: 17px;height: 17px;margin-top: 2px;}
.back-link{display: block;margin-top: 30px;line-height: 20px;color: #3385ff;}
.layers{display: flex;align-items: center;height: 28px;margin-top: 29px;padding-left: 75px;}
.layers-label{font-weight: 700;font-size: 14px;width: 50px;letter-spacing: -.3px;margin-top: -2px;}
.help{
	width: 14px;
	height: 14px;
	border-radius: 50%;
	background: #95c3f5;
	color: #fff;
	font-size: 11px;
	line-height: 14px;
	text-align: center;
}
.layer-opts{display: flex;gap: 9px;margin-left: 21px;}
.opt{
	width: 49.500px;
	height: 28px;
	border: 1px solid #ddd;
	text-align: center;
	line-height: 26px;
	position: relative;
}
.opt-on{border-color: #3385ff;}
.opt-tick{position: absolute;right: -1px;bottom: -1px;width: 16px;height: 16px;}

/*right column*/
.side{width: 350px;flex: none;}
.charge-card{
	background: #fff;
	box-shadow: 0 0 2px #ddd;
	padding: 27px 30px 39px 30px;
}
.charge-title{font-size: 18px;font-weight: 400;line-height: 24px;margin-bottom: 8px;color: #333;}
.row{display: flex;justify-content: space-between;height: 29px;line-height: 29px;}
.sub-title{font-size: 12px;font-weight: 700;line-height: 20px;color: #555;}
.build-title{margin-top: 38px;margin-bottom: 7px;}
.row-build{
	display: flex;
	justify-content: space-between;
	align-items: center;
	height: 44px;
	font-size: 13px;
	color: #111;
}
.row-build label{display: flex;align-items: center;font-size: 12px;color: #aaa;padding-left: 3px;}
.radio{
	width: 14px;
	height: 14px;
	border: 1px solid #ccc;
	border-radius: 50%;
	margin-right: 6px;
}
.radio-on{border-color: #2b8ce8;background: radial-gradient(circle, #2b8ce8 0 3px, #fff 3.500px);}
.rule{height: 1px;background: #eaeaea;}
.rule-top{margin-top: 15px;margin-bottom: 34px;}
.row-total{font-size: 16px;color: #ff6600;}
.row-weight{color: #a3a3a3;}
.cart-btn{
	display: block;
	width: 220px;
	height: 40px;
	margin: 25px auto 20px;
	padding-bottom: 2px;
	background: #3385ff;
	border: 0;
	border-radius: 4px;
	color: #fff;
	font-family: inherit;
	font-size: 18px;
	font-weight: 700;
	letter-spacing: -.2px;
}
.ship-title{margin-top: 28px;}
.ship-row{
	display: flex;
	align-items: center;
	gap: 7px;
	height: 20px;
	margin-top: 17px;
	font-size: 12px;
	color: #a3a3a3;
}
.ship-drop{
	width: 16px;
	height: 16px;
	margin-left: 3px;
	border: 1px solid #666;
	display: flex;
	align-items: center;
	justify-content: center;
}
.ship-drop svg{width: 11px;height: 8px;}
.ship-time{
	display: flex;
	justify-content: space-between;
	height: 20px;
	line-height: 20px;
	margin-top: 7px;
	font-size: 12px;
	color: #a3a3a3;
}
.lcsc{
	display: block;
	margin-top: 30px;
	text-align: right;
	line-height: 20px;
	color: #7fb0ff;
}

/*cookie notice, sits over the page*/
.cookie{
	position: absolute;
	left: 0;
	right: 0;
	bottom: 0;
	height: 64px;
	display: flex;
	padding: 10px 0 0 577px;
	background: #3385ff;
	color: #e6f0ff;
	font-size: 12px;
}
.cookie-text{width: 651px;line-height: 17px;}
.cookie-text a{color: #fff;text-decoration: underline;}
.accept{
	width: 95px;
	height: 26px;
	margin-top: 7px;
	background: #0ea5ff;
	border: 1px solid #14dcff;
	border-radius: 3px;
	color: #fff;
	font-family: inherit;
	font-size: 14px;
}

.scrollbar{
	width: 15px;
	flex: none;
	position: relative;
	background: #f1f1f1;
}
.sb-thumb{
	position: absolute;
	left: 2px;
	top: 42px;
	width: 11px;
	height: 294px;
	background: #c1c1c1;
}
.sb-up,.sb-down{
	position: absolute;
	left: 4px;
	width: 0;
	height: 0;
	border-left: 4px solid transparent;
	border-right: 4px solid transparent;
}
.sb-up{top: 7px;border-bottom: 4px solid #505050;}
.sb-down{bottom: 7px;border-top: 4px solid #505050;}

/*download shelf*/
.downloads{
	height: 49px;
	flex: none;
	display: flex;
	align-items: center;
	background: #f4f5f7;
	border-top: 1px solid #cfd0d4;
	font-family: Lato, "Noto Sans", sans-serif;
	font-size: 16px;
	color: #444;
}
.dl{
	width: 227px;
	height: 36px;
	display: flex;
	align-items: center;
	padding-left: 18px;
	border-right: 1px solid #c5c6c9;
}
.dl:first-child{width: 231px;padding-left: 21px;}
.dl-ico{width: 14px;height: 18px;margin-right: 14px;flex: none;}
.dl-name{width: 152px;flex: none;white-space: nowrap;}
.dl-up{width: 12px;height: 8px;}
.show-all{
	width: 89px;
	height: 32px;
	margin-left: auto;
	padding-bottom: 2px;
	background: #e9eaed;
	border: 1px solid #c9cacd;
	border-radius: 4px;
	color: #3c4043;
	font-family: Lato, "Noto Sans", sans-serif;
	font-size: 15px;
	font-weight: 700;
}
.dl-close{width: 12px;height: 12px;margin: 0 12px 0 12px;color: #666;}
```
